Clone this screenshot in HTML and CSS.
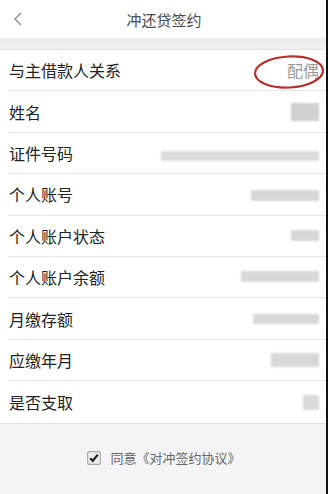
FILE: index.html
```html
<!DOCTYPE html>
<html lang="zh-CN">
<head>
<meta charset="utf-8">
<title>冲还贷签约</title>
<link rel="stylesheet" href="styles.css">
</head>
<body>
<div class="app">
  <header class="topbar">
    <svg class="back" width="10" height="14" viewBox="0 0 10 14"><path d="M8 1 L2 7 L8 13" fill="none" stroke="#8a8a8a" stroke-width="1.4"/></svg>
    <div class="title">冲还贷签约</div>
  </header>
  <div class="gap"></div>
  <div class="list">
    <div class="row">
      <span class="label">与主借款人关系</span>
      <span class="value">配偶</span>
      <svg class="circle" width="72" height="36" viewBox="0 0 72 36"><ellipse cx="36" cy="18" rx="34" ry="15.5" fill="none" stroke="#b3302b" stroke-width="2.2" transform="rotate(-3 36 18)"/></svg>
    </div>
    <div class="row"><span class="label">姓名</span><span class="blur b-name"></span></div>
    <div class="row"><span class="label">证件号码</span><span class="blur b-id"></span></div>
    <div class="row"><span class="label">个人账号</span><span class="blur b-acct"></span></div>
    <div class="row"><span class="label">个人账户状态</span><span class="blur b-state"></span></div>
    <div class="row"><span class="label">个人账户余额</span><span class="blur b-bal"></span></div>
    <div class="row"><span class="label">月缴存额</span><span class="blur b-month"></span></div>
    <div class="row"><span class="label">应缴年月</span><span class="blur b-ym"></span></div>
    <div class="row last"><span class="label">是否支取</span><span class="blur b-draw"></span></div>
  </div>
  <div class="agree">
    <svg class="check" width="14" height="14" viewBox="0 0 14 14"><rect x="0.6" y="0.6" width="12.8" height="12.8" rx="2" fill="#ececec" stroke="#a8a8a8" stroke-width="1.1"/><path d="M3.2 7.2 L5.8 9.8 L10.8 3.6" fill="none" stroke="#222" stroke-width="2.2"/></svg>
    <span class="agree-text">同意《对冲签约协议》</span>
  </div>
</div>
</body>
</html>
```
FILE: styles.css
```css
html, body {
  margin: 0;
  padding: 0;
  background: #111;
}
body {
  font-family: "Noto Sans CJK SC", "Noto Sans", sans-serif;
  width: 328px;
  height: 494px;
  overflow: hidden;
}
.app {
  width: 326px;
  height: 494px;
  background: #f4f4f6;
  display: flex;
  flex-direction: column;
}
.topbar {
  height: 38px;
  background: #fff;
  position: relative;
  display: flex;
  align-items: center;
  justify-content: center;
}
.back {
  position: absolute;
  left: 13px;
  top: 12px;
}
.title {
  font-size: 15px;
  color: #4a4a4a;
  margin-left: 2px;
  margin-top: 0;
}
.gap {
  height: 11px;
  background: linear-gradient(#ececee, #f2f2f4);
}
.list {
  background: #fff;
  border-top: 1px solid #e2e2e4;
  border-bottom: 1px solid #e2e2e4;
  padding-left: 8px;
}
.row {
  box-sizing: border-box;
  height: 41.4px;
  border-bottom: 1px solid #e6e6e8;
  display: flex;
  align-items: center;
  justify-content: space-between;
  padding-right: 7px;
  position: relative;
}
.row.last {
  border-bottom: none;
}
.label {
  font-size: 16px;
  color: #222;
  padding-left: 1px;
}
.value {
  font-size: 16px;
  color: #9a9a9a;
  margin-right: 0;
}
.circle {
  position: absolute;
  left: 245px;
  top: 4px;
}
.blur {
  display: block;
  background: #d2d2d2;
  filter: blur(1.3px);
}
.b-name { width: 28px; height: 18px; margin-top: 0; background: #d0d0d0; }
.b-id { width: 158px; height: 10px; margin-top: 6px; background: #dcdcdc; }
.b-acct { width: 68px; height: 11px; margin-top: 3px; background: #d6d6d6; }
.b-state { width: 28px; height: 11px; margin-top: 0; background: #d6d6d6; }
.b-bal { width: 78px; height: 11px; margin-top: -2px; background: #d8d8d8; }
.b-month { width: 66px; height: 10px; margin-top: 0; background: #d8d8d8; }
.b-ym { width: 48px; height: 14px; margin-top: 0; background: #d8d8d8; }
.b-draw { width: 16px; height: 15px; margin-top: 2px; background: #dadada; }
.agree {
  display: flex;
  align-items: center;
  justify-content: center;
  padding-top: 26px;
  padding-left: 2px;
  gap: 9px;
}
.check {
  display: block;
}
.agree-text {
  font-size: 13px;
  color: #666;
  line-height: 16px;
}
```
